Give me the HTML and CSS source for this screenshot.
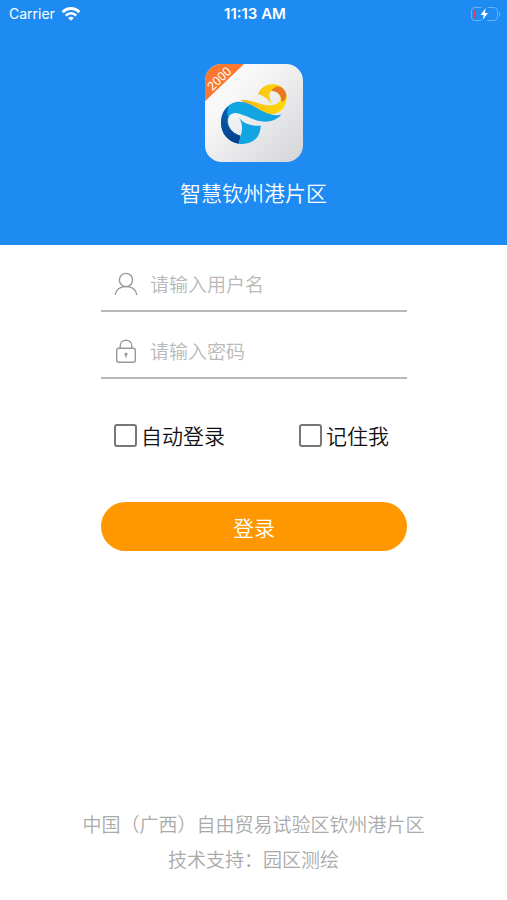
FILE: index.html
```
<!DOCTYPE html>
<html lang="zh-CN">
<head>
  <meta charset="UTF-8" />
  <meta name="viewport" content="width=device-width, initial-scale=1.0"/>
  <title>智慧钦州港片区</title>
  <link rel="stylesheet" href="styles.css">
</head>
<body>
  <header class="header">
    <div class="status-bar">
      <div class="carrier">
        <span>Carrier</span>
        <svg width="20" height="16" viewBox="0 0 20 16" fill="none" stroke="#fff" stroke-width="3">
          <path d="M1.7 6.2C6.3 1.3 13.7 1.3 18.3 6.2" />
          <path d="M4.8 9.6C7.7 6.5 12.3 6.5 15.2 9.6" stroke-width="2.6" />
          <path d="M10 14.8L7.2 12Q10 9.6 12.8 12Z" fill="#fff" stroke="none" />
        </svg>
      </div>
      <span class="time">11:13 AM</span>
      <div class="battery">
        <svg width="31" height="16" viewBox="0 0 31 16">
          <path d="M11.5 1.5H4.5Q1.5 1.5 1.5 5V11Q1.5 14.5 4.5 14.5H11.5M17.5 1.5H24Q27.5 1.5 27.5 5V11Q27.5 14.5 24 14.5H17.5" fill="none" stroke="#6db1f5" />
          <path d="M29 5.5Q31.5 8 29 10.5Z" fill="#6db1f5" />
          <rect x="3" y="4" width="3" height="8" rx="1" fill="#e5404f" />
          <path d="M15.8 2L10.5 9H13.8L12.6 14L18 7H14.8Z" fill="#fff" />
        </svg>
      </div>
    </div>

    <!-- App logo -->
    <svg class="logo" viewBox="0 0 294 294">
      <defs>
        <clipPath id="tile"><rect width="294" height="294" rx="50" /></clipPath>
        <linearGradient id="tileFill" x1="0" y1="0" x2="1" y2="1">
          <stop offset="0.3" stop-color="#f8f8f9" />
          <stop offset="1" stop-color="#d3d4d6" />
        </linearGradient>
        <linearGradient id="yellow" x1="0" y1="0" x2="1" y2="0">
          <stop offset="0" stop-color="#f7b51c" />
          <stop offset="1" stop-color="#ffdc00" />
        </linearGradient>
        <linearGradient id="navy" x1="0" y1="0" x2="0" y2="1">
          <stop offset="0" stop-color="#0b62b4" />
          <stop offset="1" stop-color="#064088" />
        </linearGradient>
      </defs>
      <g clip-path="url(#tile)">
        <rect width="294" height="294" fill="url(#tileFill)" />
        <path d="M0 0H117L0 112Z" fill="#f9772f" />
        <text class="logo-tag" x="43" y="57" transform="rotate(-44 43 44)">2000</text>
        <g transform="translate(31 43)">
          <path d="M75 66C100 60 125 76 155 81C185 83 200 70 195 55C190 45 180 37 168 38C158 45 163 60 169 77C158 62 145 52 128 48C135 28 152 18 173 18C200 18 216 38 214 62C210 92 190 108 165 108C135 106 108 82 75 66Z" fill="url(#yellow)" />
          <path d="M168 38C176 22 195 20 206 34C217 46 215 62 201 71C197 66 198 61 196 55C190 43 180 38 168 38Z" fill="#e9772a" />
          <path d="M30 94C46 66 80 64 108 80C136 95 163 116 198 109C178 132 145 135 115 123C92 113 76 106 60 104C40 104 33 125 42 147C50 162 63 169 76 172L70 196C38 191 17 165 17 134C17 118 22 105 30 94Z" fill="#12a5e3" />
          <path d="M40 82C35 97 35 106 38 115C34 128 37 140 42 147C50 162 63 169 76 172L70 196C38 191 17 165 17 134C17 110 25 93 40 82Z" fill="url(#navy)" />
          <path d="M72 119C86 136 107 144 136 142C136 178 110 201 70 196L76 172C83 153 81 136 72 119Z" fill="#12a5e3" />
        </g>
      </g>
    </svg>
    <h1>智慧钦州港片区</h1>
  </header>

  <main>
    <form class="login-form">
      <div class="field">
        <label for="username" aria-label="用户名">
          <svg width="24" height="24" viewBox="0 0 24 24" fill="none" stroke="#999" stroke-width="1.4">
            <circle cx="12" cy="8" r="6.6" />
            <path d="M1.3 23C2 17.5 6 14.6 12 14.6S22 17.5 22.7 23" />
          </svg>
        </label>
        <input type="text" id="username" placeholder="请输入用户名" />
      </div>
      <div class="field">
        <label for="password" aria-label="密码">
          <svg width="24" height="24" viewBox="0 0 24 24" fill="none" stroke="#999" stroke-width="1.4">
            <rect x="2.7" y="9.2" width="18.6" height="14" rx="2" />
            <path d="M6.2 9V7C6.2 3.5 8.7 1.2 12 1.2S17.8 3.5 17.8 7V9" />
            <circle cx="12" cy="15" r="1.6" fill="#999" stroke="none" />
            <path d="M12 15V18.5" />
          </svg>
        </label>
        <input type="password" id="password" placeholder="请输入密码" />
      </div>

      <div class="options">
        <label><input type="checkbox" id="autoLogin" />自动登录</label>
        <label><input type="checkbox" id="remember" />记住我</label>
      </div>

      <button type="submit">登录</button>
    </form>
  </main>

  <footer>
    <p>中国（广西）自由贸易试验区钦州港片区</p>
    <p>技术支持：园区测绘</p>
  </footer>
</body>
</html>
```

FILE: styles.css
```
* {
  box-sizing: border-box;
}
body {
  margin: 0;
  min-height: 100vh;
  display: flex;
  flex-direction: column;
  background: #fff;
  font-family: "Noto Sans CJK SC", sans-serif;
  font-weight: 350;
}
.header {
  display: flex;
  flex-direction: column;
  align-items: center;
  padding-bottom: 37px;
  background: #1e8bf2;
  color: white;
}
.status-bar {
  display: grid;
  grid-template-columns: 1fr auto 1fr;
  align-items: center;
  width: 100%;
  height: 27px;
  padding: 0 6px 0 9px;
  font-family: Inter, sans-serif;
  font-size: 14px;
}
.carrier {
  display: flex;
  align-items: center;
  gap: 6px;
  font-weight: 400;
}
.time {
  font-size: 15px;
  font-weight: 600;
}
.battery {
  display: flex;
  justify-content: flex-end;
}
.logo {
  width: 98px;
  height: 98px;
  margin-top: 37px;
}
.logo-tag {
  fill: white;
  font-family: Roboto, sans-serif;
  font-size: 37px;
  font-weight: 400;
  text-anchor: middle;
}
h1 {
  margin: 14px 0 0;
  font-size: 21px;
  line-height: 32px;
  font-weight: 350;
}
main {
  flex: 1;
  padding: 0 100px 0 101px;
}
.field {
  display: flex;
  align-items: center;
  gap: 12px;
  height: 56px;
  margin-top: 11px;
  padding: 2px 0 0 13px;
  border-bottom: 2px solid #b8b8b8;
}
.field label {
  display: flex;
}
.field input {
  flex: 1;
  min-width: 0;
  padding: 0;
  border: none;
  outline: none;
  background: none;
  font: inherit;
  font-size: 19px;
  line-height: 28px;
  color: #333;
}
.field input::placeholder {
  color: #b8b8b8;
}
.options {
  display: flex;
  justify-content: space-between;
  margin-top: 40px;
  padding: 0 18px 0 13px;
}
.options label {
  display: flex;
  align-items: center;
  gap: 4px;
  font-size: 21px;
  line-height: 32px;
  color: #111;
}
.options input {
  appearance: none;
  width: 23px;
  height: 23px;
  margin: 0;
  border: 2px solid #777;
  border-radius: 3px;
  background: white;
}
.options input:checked {
  background: #1e8bf2;
}
button {
  width: 100%;
  height: 49px;
  margin-top: 51px;
  border: none;
  border-radius: 25px;
  background: #ff9800;
  color: white;
  font: inherit;
  font-size: 21px;
  cursor: pointer;
}
footer {
  padding-bottom: 24px;
  text-align: center;
  font-size: 19px;
  line-height: 35px;
  color: #aaa;
}
footer p {
  margin: 0;
}
```
